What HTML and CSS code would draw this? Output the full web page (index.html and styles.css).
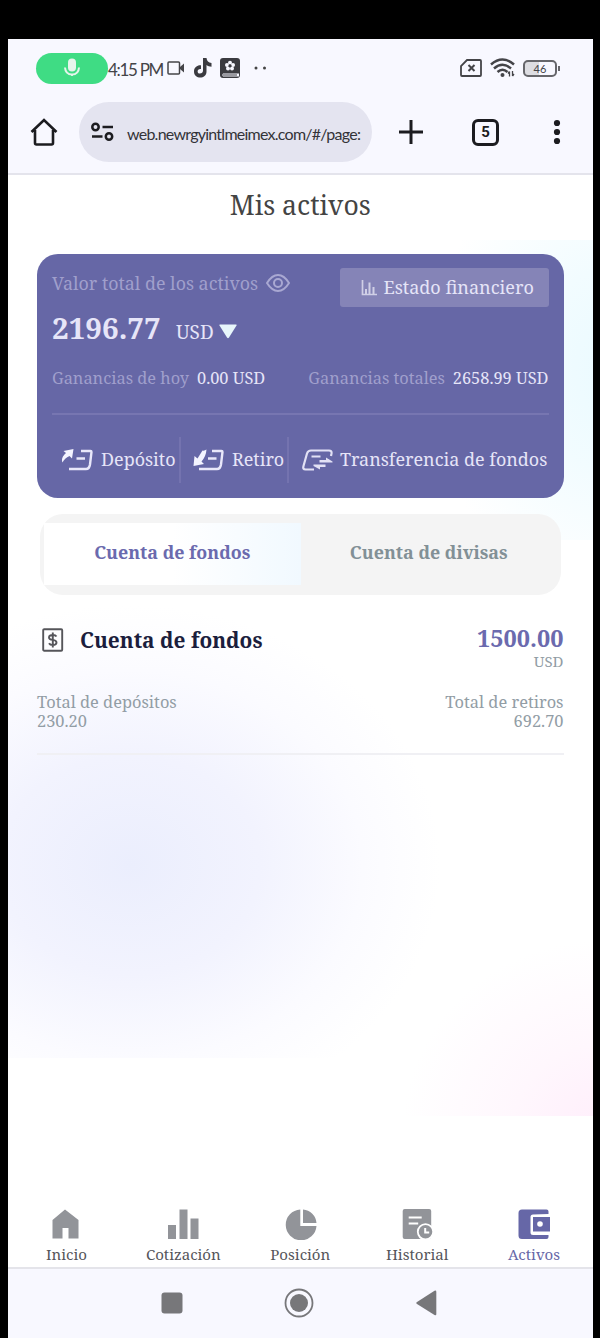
FILE: index.html
```html
<!DOCTYPE html>
<html lang="es">
<head>
<meta charset="utf-8">
<title>Mis activos</title>
<link rel="stylesheet" href="styles.css">
</head>
<body>
<div class="screen">
  <header class="browser">
    <div class="status">
      <span class="mic"><svg width="18" height="20" viewBox="0 0 18 20"><rect x="5" y="0.5" width="8" height="13" rx="4" fill="#e6f5ec"/><path d="M2 9.500q.5 7 7 7t7-7M9 16v2" fill="none" stroke="#e6f5ec" stroke-width="2"/></svg></span>
      <span class="clock">4:15 PM</span>
      <svg class="s-cam" width="18" height="16" viewBox="0 0 18 16"><rect x="1" y="2" width="11.500" height="12" rx="1" fill="none" stroke="#444448" stroke-width="1.500"/><path d="M13 7l4-3.500v9L13 9z" fill="#444448"/></svg>
      <svg class="s-tik" width="18" height="20" viewBox="0 0 18 20"><path d="M9 0h3.500c.3 3 2 4.700 5 5v3.700c-2 0-3.700-.6-5-1.600v6.300c0 8-12.500 8-12.500 0 0-4.300 3.500-6.600 7-6.200v3.900c-4-.7-4.500 4.500-1.200 4.500 2 0 3.200-1 3.200-3z" fill="#3b3b40"/></svg>
      <svg class="s-book" width="20" height="20" viewBox="0 0 20 20"><rect width="20" height="20" rx="3" fill="#3b3b40"/><path d="M2 15.500h17v3H3q-1.500-1.500 0-3" fill="#f8f8ff"/><path d="M3 17h14" stroke="#3b3b40"/><g fill="#f8f8ff"><circle cx="10" cy="4.700" r="2"/><circle cx="13" cy="7" r="2"/><circle cx="12" cy="10.500" r="2"/><circle cx="8" cy="10.500" r="2"/><circle cx="7" cy="7" r="2"/></g><circle cx="10" cy="7.800" r="1.500" fill="#3b3b40"/></svg>
      <svg class="s-dots" width="13" height="4" viewBox="0 0 13 4"><circle cx="2" cy="2" r="1.500" fill="#444"/><circle cx="10.500" cy="2" r="1.500" fill="#444"/></svg>
      <svg class="s-sim" width="22" height="18" viewBox="0 0 22 18"><path d="M7 1h13q1 0 1 1v14q0 1-1 1H2q-1 0-1-1V7z" fill="none" stroke="#444448" stroke-width="1.800"/><path d="M8.500 6l6 6m0-6l-6 6" stroke="#444448" stroke-width="2"/></svg>
      <svg class="s-wifi" width="25" height="20" viewBox="0 0 25 20"><g fill="none" stroke="#444448" stroke-width="2.500"><path d="M1 6.500q11.500-10 23 0"/><path d="M4 10.500q8.500-7.500 17 0"/><path d="M7.500 14q5-4.500 10 0"/></g><circle cx="12.500" cy="17" r="2" fill="#444448"/><path d="M19.500 13.500v5m-1.500-3l1.500-2M22.500 13v5m1.500-2l-1.500 2" stroke="#444448" stroke-width="1.300"/></svg>
      <span class="battery">46</span>
    </div>
    <div class="toolbar">
      <svg class="t-home" width="28" height="28" viewBox="0 0 28 28"><path d="M1.500 14L14 2l12.500 12M5 12v13q0 1.500 1.500 1.500h15q1.500 0 1.500-1.500V12" fill="none" stroke="#1c1c20" stroke-width="2.600"/></svg>
      <div class="url">
        <svg width="23" height="20" viewBox="0 0 23 20" fill="none" stroke="#1c1c20" stroke-width="2.500"><circle cx="4.500" cy="5" r="3.200"/><path d="M11.500 5H22M1 14.500h10.500"/><circle cx="18" cy="14.500" r="3.200"/></svg>
        <span class="address">web.newrgyintlmeimex.com/#/page:</span>
      </div>
      <svg class="t-plus" width="24" height="24" viewBox="0 0 24 24"><path d="M12 0v24M0 12h24" stroke="#1c1c20" stroke-width="3"/></svg>
      <span class="tabcount">5</span>
      <svg class="t-menu" width="8" height="26" viewBox="0 0 8 26" fill="#1c1c20"><circle cx="4" cy="4" r="3.100"/><circle cx="4" cy="13" r="3.100"/><circle cx="4" cy="22" r="3.100"/></svg>
    </div>
  </header>

  <main class="page">
    <h1 class="title">Mis activos</h1>
    <section class="card">
      <div class="card-top">
        <div class="total">
          <div class="label-row"><span class="label">Valor total de los activos</span>
            <svg width="24" height="18" viewBox="0 0 24 18" fill="none" stroke="#a9a8d2" stroke-width="2"><path d="M1 9q5-8 11-8t11 8q-5 8-11 8T1 9z"/><circle cx="12" cy="9" r="4"/></svg>
          </div>
          <div class="amount-row"><span class="amount">2196.77</span><span class="currency">USD</span><svg width="18" height="15" viewBox="0 0 18 15"><path d="M1 .5h16q1 0 .5 1L10 13.500q-1 1.500-2 0L.5 1.500Q0 .5 1 .5z" fill="#e8f6fb"/></svg></div>
        </div>
        <div class="report"><svg width="16" height="17" viewBox="0 0 16 17"><path d="M1.500 1v14.500H16" fill="none" stroke="#d0cfe6" stroke-width="1.700"/><path d="M5 10v5M8.500 3.500v11.500M12.500 8v7" stroke="#d0cfe6" stroke-width="2"/></svg><span>Estado financiero</span></div>
      </div>
      <div class="profits">
        <div><span class="muted">Ganancias de hoy</span><span>0.00 USD</span></div>
        <div><span class="muted">Ganancias totales</span><span>2658.99 USD</span></div>
      </div>
      <div class="actions">
        <div class="action a-dep"><svg width="32" height="22" viewBox="0 0 32 22"><path d="M12.500 0L11 9.500 8.500 7Q3.500 9 1.500 13.500-.5 9 5 4L2.500 2z" fill="#f4f4ff"/><path d="M20 2h9.500q1 0 1 1L29 15.500q-.7 4.500-4 4.500H8M15.500 9.500H24" fill="none" stroke="#e9e8fa" stroke-width="2.400"/></svg><span>Depósito</span></div>
        <div class="action a-ret"><svg width="32" height="22" viewBox="0 0 32 22"><path d="M.5 17L1.500 7 4.500 9.500 9.500 1.500q2 .5 4-1-.5 7-5 12L11 15z" fill="#f4f4ff"/><path d="M19 2h9.500q1 0 1 1L28 15.500q-.7 4.500-4 4.500H6M15 9.500h8.500" fill="none" stroke="#e9e8fa" stroke-width="2.400"/></svg><span>Retiro</span></div>
        <div class="action a-tra"><svg width="31" height="22" viewBox="0 0 31 22"><path d="M12 20.500H3.500q-3 0-2-3.500L5 4.500Q6 1.500 9 1.500h18q3 0 2.500 3L29 7M9.500 7.500h9" fill="none" stroke="#e2e1f5" stroke-width="2.200"/><path d="M17.500 11h6.500V8.500l6.500 4v1h-13zM23.500 18H18v2.500L11.500 17v-1.500h12z" fill="#e2e1f5"/></svg><span>Transferencia de fondos</span></div>
      </div>
    </section>

    <div class="tabs"><div class="tab active"><span>Cuenta de fondos</span></div><div class="tab"><span>Cuenta de divisas</span></div></div>

    <section class="account">
      <div class="account-head">
        <svg width="22" height="24" viewBox="0 0 22 24" fill="none" stroke="#55555a"><rect x="1.200" y="1.200" width="19" height="21.500" rx="1" stroke-width="1.900"/><path d="M14.500 8.500Q13.500 7 11 7 7 7 7 9.500q0 2 3.700 2.400 3.800.5 3.800 2.600 0 2.500-3.700 2.500-2.800 0-3.800-1.800M10.800 4.500V19.500" stroke-width="1.900"/></svg>
        <h2>Cuenta de fondos</h2>
        <div class="balance"><b>1500.00</b><span>USD</span></div>
      </div>
      <div class="stats">
        <div class="stat"><span>Total de depósitos</span><span>230.20</span></div>
        <div class="stat right"><span>Total de retiros</span><span>692.70</span></div>
      </div>
    </section>
  </main>

  <nav class="nav">
    <div class="item"><svg width="30" height="31" viewBox="1 0 30 31"><path d="M15 0.500L28.500 11v18.500h-10v-10.500h-6v10.500h-10V11z" fill="#929499"/></svg><span>Inicio</span></div>
    <div class="item"><svg width="31" height="31" viewBox="0 0 31 31" fill="#929499"><path d="M0 16h8v14H0zM11.500.500h8V30h-8zM22.500 9.500h8V30h-8z"/></svg><span>Cotización</span></div>
    <div class="item"><svg width="33" height="31" viewBox="0 0 33 31" fill="#929499"><path d="M16.300 .5V17H32.500A15.400 15.400 0 1 1 16.300 .5zM19 .5A14.500 14.500 0 0 1 32.500 14H19z"/></svg><span>Posición</span></div>
    <div class="item"><svg width="31" height="31" viewBox="-.7 0 31 31"><rect x="0" y="0" width="28.500" height="30" rx="2" fill="#929499"/><path d="M6 8.500h13M6 14.500h9.500" stroke="#fff" stroke-width="2"/><circle cx="22.800" cy="22.800" r="7.700" fill="#929499" stroke="#fff" stroke-width="1.800"/><path d="M22.500 19v4.500h4" fill="none" stroke="#fff" stroke-width="2"/></svg><span>Historial</span></div>
    <div class="item on"><svg width="32" height="31" viewBox="0 0 32 31"><path d="M30.500 5V2.500q0-2-2-2H4q-3.500 0-3.500 3.500v22.500Q.5 30 4 30h24.500q2 0 2-2v-2H15q-2.500 0-2.500-2.500V8q0-2.500 2.500-2.500zM15 8h17v14.500H15z" fill="#6667a7"/><circle cx="22" cy="15" r="2.800" fill="#fff"/></svg><span>Activos</span></div>
  </nav>
  <footer class="system">
    <svg class="k1" width="22" height="22"><rect x=".5" y=".5" width="21" height="21" rx="3" fill="#77777a"/></svg>
    <svg class="k2" width="30" height="30"><circle cx="15" cy="15" r="13.500" fill="none" stroke="#77777a" stroke-width="1.800"/><circle cx="15" cy="15" r="9" fill="#77777a"/></svg>
    <svg class="k3" width="21" height="26" viewBox="0 0 21 26"><path d="M1 12L18.500.800Q20.300 0 20.300 2v22q0 2-1.800 1L1 14q-1.500-1 0-2z" fill="#77777a"/></svg>
  </footer>
</div>
</body>
</html>
```
FILE: styles.css
```css
* { box-sizing: border-box; }
body { margin: 0; background: #000; font-family: "Noto Serif", "DejaVu Serif Condensed", "DejaVu Serif", serif; }
svg { display: block; flex: none; }
span, b, h1, h2 { white-space: nowrap; }
.screen { width: 584.500px; height: 1299px; margin: 39px 7px 0 8px; display: flex; flex-direction: column; background: #fff; overflow: hidden; }
.browser { height: 136px; background: #f8f8ff; border-bottom: 2px solid #e4e4ec; flex: none; }
.status { height: 58px; display: flex; align-items: center; padding-left: 28px; color: #444448; font-family: "Lato", sans-serif; }
.mic { width: 72px; height: 31px; border-radius: 16px; background: #3fdc84; display: flex; align-items: center; justify-content: center; flex: none; }
.clock { width: 59px; font-size: 17px; letter-spacing: -1.3px; flex: none; padding-top: 2px; }
.s-tik { margin-left: 9px; }
.s-book { margin-left: 8px; }
.s-dots { margin-left: 14px; }
.s-sim { margin-left: 193px; }
.s-wifi { margin-left: 8px; }
.battery { position: relative; width: 34px; height: 17px; margin-left: 8px; border: 2px solid #66666b; border-radius: 5px; background: linear-gradient(90deg, #dddde2 46%, transparent 46%); font-size: 11px; line-height: 13px; text-align: center; flex: none; }
.battery::after { content: ""; position: absolute; right: -5px; top: 4px; width: 2px; height: 5px; background: #66666b; }
.toolbar { height: 76px; display: flex; align-items: center; padding: 0 0 6px 22px; }
.url { width: 293px; height: 60px; margin-left: 21px; border-radius: 30px; background: #e4e4f0; display: flex; align-items: center; padding-left: 12px; flex: none; }
.address { margin: 3px 0 0 13px; font: 16px/24px "Lato", sans-serif; letter-spacing: -0.75px; color: #333338; }
.t-plus { margin-left: 27px; }
.tabcount { width: 27px; height: 27px; margin-left: 49px; border: 3px solid #1c1c20; border-radius: 6px; font: bold 15px/21px "Roboto", sans-serif; text-align: center; color: #1c1c20; flex: none; }
.t-menu { margin-left: 54px; }

.page { height: 1029px; flex: none; padding: 0 29px;
  background:
    radial-gradient(ellipse 310px 260px at 122px 690px, #ebeefd 0, #f2f3fe 42%, #fbfbff 75%, rgba(255,255,255,0) 100%) 0 0 / 100% 883px no-repeat,
    radial-gradient(ellipse 200px 190px at 595px 955px, #ffeefb 0, #fff7fd 45%, rgba(255,255,255,0) 100%) 0 0 / 100% 941px no-repeat,
    radial-gradient(ellipse 190px 230px at 610px 130px, #eafaff 0, #f2fcff 45%, rgba(255,255,255,0) 100%) 0 65px / 100% 300px no-repeat,
    #fff; }
.title { margin: 0; height: 79px; padding-top: 10px; font-size: 26.600px; line-height: 40px; font-weight: 400; text-align: center; color: #444; }
.card { height: 243.500px; width: 526.500px; border-radius: 21px; background: #6667a6; padding: 14px 15px; color: #e6e5f8; }
.card-top { display: flex; justify-content: space-between; height: 92px; }
.label-row { display: flex; align-items: center; gap: 8px; height: 30px; color: #a09fcc; }
.label { font-size: 17.850px; width: 206px; margin-top: -1px; }
.amount-row { display: flex; align-items: baseline; height: 47px; }
.amount { font-size: 29.500px; font-weight: 700; line-height: 60px; width: 124px; }
.currency { font-size: 19px; width: 43px; }
.report { width: 209px; height: 39px; border-radius: 3px; background: #8584b7; display: flex; align-items: center; padding-left: 21px; gap: 7px; font-size: 18px; }
.report span { margin-top: -2px; }
.profits { display: flex; justify-content: space-between; height: 55px; border-bottom: 2px solid #7776b1; font-size: 16.350px; line-height: 37px; }
.muted { color: #a09fcc; margin-right: 8px; }
.actions { display: flex; align-items: center; height: 46px; margin-top: 22px; font-size: 17.950px; }
.action { display: flex; align-items: center; height: 46px; flex: none; }
.action span { margin-top: -2px; }
.a-dep { width: 129px; padding-left: 9px; gap: 8px; border-right: 2px solid #7473af; }
.a-ret { width: 108px; padding-left: 12px; gap: 7px; border-right: 2px solid #7473af; }
.a-tra { padding-left: 13px; gap: 7px; }
.tabs { width: 521px; height: 81px; margin: 16px 0 0 3px; padding: 9px 4px; border-radius: 23px; background: #f4f4f4; display: flex; font-size: 17.850px; font-weight: 700; color: #829096; }
.tab { width: 257px; height: 62px; display: flex; align-items: center; justify-content: center; padding-bottom: 3px; }
.tab.active { background: linear-gradient(90deg, #fff 50%, #f1f9ff); color: #6b6aae; }
.account { height: 160px; width: 526.500px; border-bottom: 2px solid #f0f0f4; }
.account-head { display: flex; height: 94px; padding: 33px 0 0 5px; }
.account-head h2 { margin: -3px 0 0 16px; font-size: 20.850px; line-height: 30px; color: #1b1e3d; }
.balance { margin: -5px 0 0 auto; display: flex; flex-direction: column; align-items: flex-end; }
.balance b { font-size: 23.500px; line-height: 31px; color: #6b6aae; }
.balance span { font-size: 15px; line-height: 15px; color: #929da5; }
.stats { display: flex; justify-content: space-between; padding-top: 3px; font-size: 16.400px; line-height: 19px; color: #929da5; }
.stat { display: flex; flex-direction: column; }
.right { align-items: flex-end; }
.nav { height: 65px; display: flex; flex: none; border-bottom: 2px solid #e4e4ea; }
.item { width: 117px; display: flex; flex-direction: column; align-items: center; padding-top: 5px; font-size: 15.050px; line-height: 18px; color: #55555a; gap: 5px; }
.item.on { color: #6667a7; }
.system { flex: 1; display: flex; background: #f8f8ff; }
.k1 { margin: 23px 0 0 153px; }
.k2 { margin: 19px 0 0 101px; }
.k3 { margin: 21px 0 0 102px; }
```
